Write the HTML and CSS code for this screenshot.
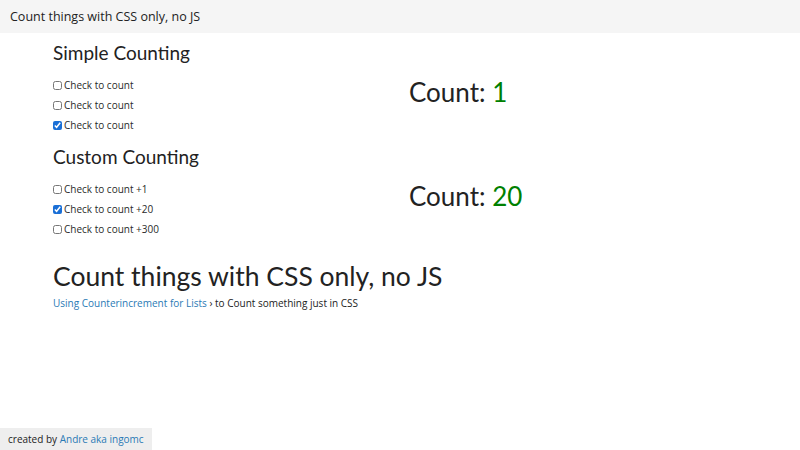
FILE: index.html
```html
<!DOCTYPE html>
<html lang="en">
<head>
<meta charset="utf-8">
<title>Count things with CSS only, no JS</title>
<link rel="stylesheet" href="styles.css">
</head>
<body>
<header class="topbar">Count things with CSS only, no JS</header>
<main class="content">
  <h2 class="section-title">Simple Counting</h2>
  <div class="row">
    <ul class="checks">
      <li><label><input type="checkbox">Check to count</label></li>
      <li><label><input type="checkbox">Check to count</label></li>
      <li><label><input type="checkbox" checked>Check to count</label></li>
    </ul>
    <div class="count">Count: <span class="num">1</span></div>
  </div>
  <h2 class="section-title">Custom Counting</h2>
  <div class="row">
    <ul class="checks">
      <li><label><input type="checkbox">Check to count +1</label></li>
      <li><label><input type="checkbox" checked>Check to count +20</label></li>
      <li><label><input type="checkbox">Check to count +300</label></li>
    </ul>
    <div class="count">Count: <span class="num">20</span></div>
  </div>
  <h1 class="title">Count things with CSS only, no JS</h1>
  <p class="sub"><a href="#">Using Counterincrement for Lists</a> › to Count something just in CSS</p>
</main>
<footer class="credit">created by <a href="#">Andre aka ingomc</a></footer>
</body>
</html>
```
FILE: styles.css
```css
html, body {
  margin: 0;
  padding: 0;
  background: #fff;
  color: #222;
  font-family: "Open Sans", "Liberation Sans", sans-serif;
}
.topbar {
  height: 33px;
  line-height: 33px;
  padding-left: 10px;
  background: #f5f5f5;
  font-size: 12.5px;
  color: #222;
}
.content {
  padding: 0 53px;
}
.section-title {
  margin: 9px 0 0;
  font-family: Lato, "Noto Sans", sans-serif;
  font-weight: 400;
  font-size: 19px;
  line-height: 21px;
  color: #222;
}
.content .section-title + .row {
  margin-top: 12px;
}
.row + .section-title {
  margin-top: 11px;
}
.row {
  display: flex;
  align-items: flex-start;
}
.checks {
  list-style: none;
  margin: 0;
  padding: 0;
  width: 356px;
}
.checks li {
  height: 20px;
  line-height: 20px;
  font-size: 10px;
  color: #2a2a2a;
}
.checks label {
  display: flex;
  align-items: center;
}
.checks input {
  width: 9px;
  height: 9px;
  margin: 0 2px 0 0;
  accent-color: #1a6fd6;
}
.count {
  margin-top: 2px;
  font-family: Lato, "Noto Sans", sans-serif;
  font-size: 26px;
  line-height: 30px;
  color: #222;
}
.num {
  color: #008000;
}
.title {
  margin: 20px 0 0;
  font-family: Lato, "Noto Sans", sans-serif;
  font-weight: 400;
  font-size: 26.5px;
  line-height: 34px;
  color: #222;
}
.sub {
  margin: 2px 0 0;
  font-size: 10px;
  line-height: 16px;
  color: #222;
}
a {
  color: #2a7ab5;
  text-decoration: none;
}
.credit {
  position: fixed;
  left: 0;
  bottom: 0;
  height: 22px;
  line-height: 22px;
  padding: 0 8px;
  background: #eee;
  font-size: 10px;
  color: #222;
}
```
